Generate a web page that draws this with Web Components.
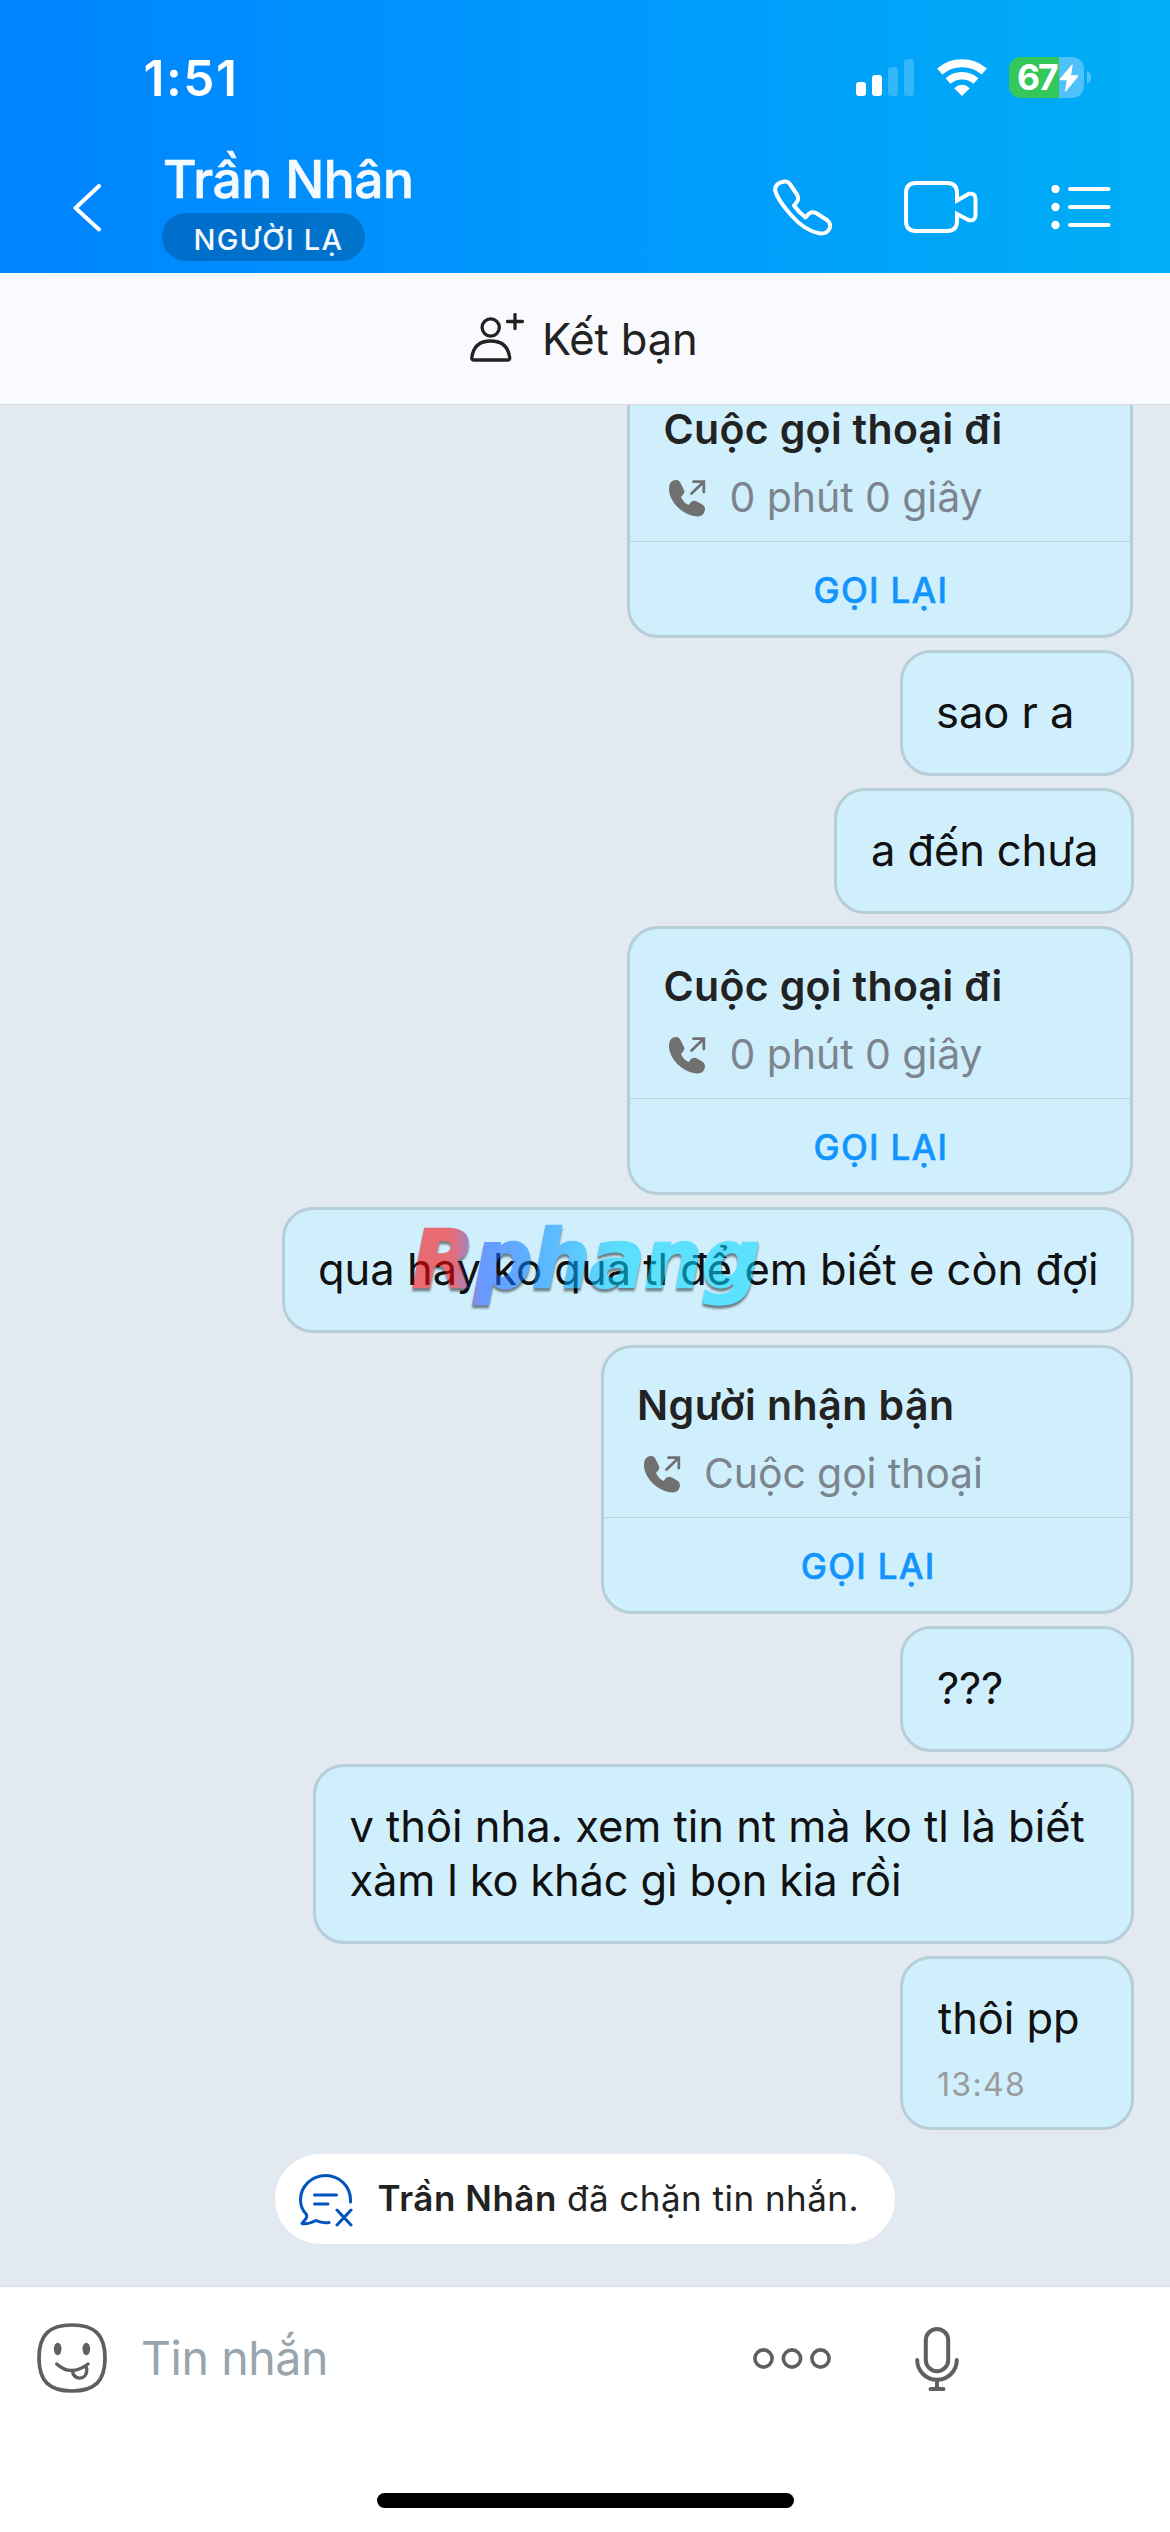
<!DOCTYPE html>
<html lang="vi">
<head>
<meta charset="utf-8">
<title>Trần Nhân</title>
<style>
html,body{margin:0;padding:0}
body{width:1170px;height:2532px;overflow:hidden;font-family:Inter,"Noto Sans",sans-serif;background:#fff}
</style>
</head>
<body>
<chat-app></chat-app>
<script>
const root = (el, html) => { el.attachShadow({mode:'open'}).innerHTML = html; };

customElements.define('status-bar', class extends HTMLElement {
  connectedCallback(){ root(this, `
<style>
:host{display:flex;height:141px;align-items:flex-start;justify-content:space-between;padding:0 79px 0 145.5px;box-sizing:border-box;color:#fff}
fit-text{font-size:49.5px;font-weight:600;line-height:60px;margin-top:48px}
.r{display:flex;margin-top:57px}
.sig{margin-top:2px}
.wifi{margin:2px 0 0 22.5px}
.bat{margin-left:22.5px;width:74.5px;height:41px;border-radius:12px;background:linear-gradient(90deg,#34c759 50px,#4fc2fb 50px);display:flex;align-items:center;padding-left:9px;box-sizing:border-box}
.bat fit-text{font-size:35.5px;font-weight:700;line-height:41px;margin-top:0}
.bat svg{margin-left:1px;flex:none}
.nub{margin:14px 0 0 3.5px}
svg{display:block}
</style>
<fit-text w="88.5">1:51</fit-text>
<div class="r">
<svg class="sig" width="58" height="37"><g fill="#fff"><rect y="23" width="10" height="14" rx="3"/><rect x="16" y="16" width="10" height="21" rx="3"/><g opacity=".2"><rect x="32" y="8" width="10" height="29" rx="3"/><rect x="48" width="10" height="37" rx="3"/></g></g></svg>
<svg class="wifi" width="50" height="37"><g fill="none" stroke="#fff" stroke-width="8"><path d="M2.7 12.5A34 34 0 0 1 47.3 12.5"/><path d="M11 22A21.5 21.5 0 0 1 39 22" stroke-width="7.5"/></g><path d="M17.2 29.2Q25 22.5 32.8 29.2L25 37Z" fill="#fff"/></svg>
<div class="bat"><fit-text w="40">67</fit-text><svg width="20" height="28" viewBox="0 0 20 28"><path d="M13 .5Q14 0 13.7 1.5L12 11.3H18.3Q19.8 11.6 18.8 13L7 27.2Q5.6 28 6 26.3L7.8 16.3H1.6Q0 16 1.2 14.6Z" fill="#fff"/></svg></div>
<svg class="nub" width="4" height="13"><path d="M0 0Q4 2 4 6.500Q4 11 0 13Z" fill="#4fc2fb"/></svg>
</div>`); }
});

customElements.define('nav-bar', class extends HTMLElement {
  connectedCallback(){ root(this, `
<style>
:host{display:flex;height:132px;color:#f3f9ff}
svg{display:block;fill:none;stroke:#fff;stroke-width:4;stroke-linecap:round;stroke-linejoin:round;flex:none}
.back{margin:43px 0 0 72px}
.who{display:flex;flex-direction:column;align-items:flex-start;margin-left:59px;width:400px}
.name{font-size:51.5px;font-weight:500;line-height:64px;margin:5.5px 0 0 3px;-webkit-text-stroke:.7px}
.tag{margin-top:2.5px;width:203px;height:48px;border-radius:24px;background:rgba(0,0,0,.2);padding-left:33.5px;box-sizing:border-box}
.tag fit-text{font-size:29px;font-weight:500;line-height:53px}
.icons{display:flex;margin-left:210px}
.icons svg:nth-child(1){margin-top:37px}
.icons svg:nth-child(2){margin:39px 0 0 70px}
.icons svg:nth-child(3){margin:44px 0 0 73px}
</style>
<svg class="back" width="31" height="48"><path d="M27 3.500L3.500 25.500L27 47" transform="translate(0 -1.500)"/></svg>
<div class="who"><fit-text class="name" w="246">Trần Nhân</fit-text><div class="tag"><fit-text w="146">NGƯỜI LẠ</fit-text></div></div>
<div class="icons">
<svg width="60" height="58"><path d="M12.500 3.500Q15.500 3 17.500 5.500L25 16.500Q27.500 21 24.500 24.500L22 27.500Q27 34.500 33.500 39.500L36.500 36Q40 33 44 35L55 42Q59.500 45.500 57.500 50.500Q55 56 48 55.500Q33 53 19 37Q5 21 3 12Q3 5 12.500 3.500Z"/></svg>
<svg width="76" height="54" style="stroke-linejoin:miter"><path d="M14 3H45Q55 3 55 13V20.500L67 13.700Q73.500 13 73.500 19V35Q73.500 41 67 40.300L55 34V41Q55 51 45 51H14Q4 51 4 41V13Q4 3 14 3Z"/></svg>
<svg width="60" height="46"><g fill="#fff" stroke="none"><circle cx="4.500" cy="4" r="4.200"/><circle cx="4.500" cy="22" r="4.200"/><circle cx="4.500" cy="40" r="4.200"/></g><path d="M19 4H57.500M19 22H57.500M19 40H57.500"/></svg>
</div>`); }
});

customElements.define('friend-bar', class extends HTMLElement {
  connectedCallback(){ root(this, `
<style>
:host{display:flex;height:132px;box-sizing:border-box;border-bottom:1px solid #d9dddf;background:#f9fafe;color:#222}
svg{display:block;margin:40px 0 0 470px;fill:none;stroke:#222;stroke-width:3.3;stroke-linecap:round;stroke-linejoin:round}
fit-text{font-size:43.5px;line-height:54px;margin:39px 0 0 21px}
</style>
<svg width="54" height="50"><circle cx="20.700" cy="14.500" r="8.600"/><path d="M3.500 47Q1.600 47 1.800 44.500Q4 28 20.700 28Q37.500 28 39.700 44.500Q40 47 38 47Z"/><path d="M37.500 8.500H52.500M45 1.500V15.500"/></svg>
<fit-text w="150">Kết bạn</fit-text>`); }
});

customElements.define('chat-bubble', class extends HTMLElement {
  connectedCallback(){
    root(this, `
<style>
:host{display:flex;flex-direction:column;box-sizing:border-box;border:3px solid #b6ced8;border-radius:31px;background:#d0effd;color:#111;padding:32px 0 0 35px;font-size:43.5px;line-height:54px;margin-right:36px}
</style><slot></slot>`);
    this.style.width = this.getAttribute('width') + 'px';
    this.style.height = (this.getAttribute('height') || 126) + 'px';
  }
});

customElements.define('call-card', class extends HTMLElement {
  connectedCallback(){
    const a = n => this.getAttribute(n);
    root(this, `
<style>
:host{display:flex;flex-direction:column;flex:none;box-sizing:border-box;height:269px;border:3px solid #b6ced8;border-radius:31px;background:#d0effd;margin-right:37.5px}
.t{font-size:41px;font-weight:600;line-height:50px;color:#222;margin:32px 0 0 36px}
.s{display:flex;height:87px;margin-left:39.5px;color:#7c858e}
.s svg{display:block;margin-top:26px;flex:none}
.s fit-text{font-size:41px;line-height:50px;margin:18px 0 0 25.5px}
.b{flex:1;border-top:1px solid #b6d2dd;margin:0 -3px;display:flex;justify-content:center;color:#1294ff}
.b fit-text{font-size:35px;font-weight:500;line-height:44px;margin-top:26px;-webkit-text-stroke:.5px}
</style>
<fit-text class="t" w="${a('tw')}">${a('title')}</fit-text>
<div class="s"><svg width="37" height="37"><path fill="#707070" d="M0 9C0 3 3 0 7 0C10 0 11 2 12 4L15 10Q16 12 14.500 14L12 17Q14 22 19.500 25L22.500 21.500Q25 20 28 21.500L34 25Q36.500 27 36 30Q34.500 36.500 29 36.500C14 36 0 22 0 9Z"/><path d="M22.500 13.500L34.500 2M24.500 1.700H34.800V12" fill="none" stroke="#707070" stroke-width="2.800" stroke-linecap="round"/></svg><fit-text w="${a('sw')}">${a('sub')}</fit-text></div>
<div class="b"><fit-text w="130">GỌI LẠI</fit-text></div>`);
    this.style.width = a('width') + 'px';
    this.removeAttribute('title');
  }
});

customElements.define('block-notice', class extends HTMLElement {
  connectedCallback(){ root(this, `
<style>
:host{display:flex;align-self:flex-start;box-sizing:border-box;width:620px;height:90px;margin:12px 0 0 275px;border-radius:45px;background:#fff;color:#222;padding-left:24px}
svg{display:block;margin-top:20px;fill:none;stroke:#0055bd;stroke-width:3;stroke-linecap:round;stroke-linejoin:round}
fit-text{font-size:35px;line-height:44px;margin-top:22px}
.n{font-weight:600;margin-left:25.5px}
.m{margin-left:13px}
</style>
<svg width="54" height="53"><path d="M51.500 28V26A25 24.500 0 0 0 1.500 26Q1.500 34 7 40Q8.500 42 7 44.500L3 49.500Q9 50.500 17 46.500Q23 49.500 30 48.500M15.500 21H37.500M15.500 30H29M38 36L52 51M52 36L38 51"/></svg>
<fit-text class="n" w="176.5">Trần Nhân</fit-text><fit-text class="m" w="288.5">đã chặn tin nhắn.</fit-text>`); }
});

customElements.define('water-mark', class extends HTMLElement {
  connectedCallback(){ root(this, `
<style>
:host{position:absolute;left:401px;top:1207px;width:370px;height:110px;pointer-events:none}
svg{display:block;overflow:visible;opacity:.56;filter:drop-shadow(0 3px 1px rgba(0,0,0,.85))}
</style>
<svg width="370" height="110"><defs><linearGradient id="g" gradientUnits="userSpaceOnUse" x1="10" y1="0" x2="360" y2="0"><stop offset=".08" stop-color="#fc0505"/><stop offset=".12" stop-color="#f60812"/><stop offset=".2" stop-color="#1a55ff"/><stop offset=".38" stop-color="#008cff"/><stop offset=".6" stop-color="#00d4ff"/><stop offset="1" stop-color="#00d8ff"/></linearGradient></defs>
<text x="11" y="80" textLength="348" lengthAdjust="spacingAndGlyphs" font-family="DejaVu Sans" font-weight="700" font-style="italic" font-size="80" fill="url(#g)" stroke="url(#g)" stroke-width="2.500">Rphang</text></svg>`); }
});

customElements.define('message-list', class extends HTMLElement {
  connectedCallback(){ root(this, `
<style>
:host{display:block;height:1881px;overflow:hidden;background:#e2e9f1}
.col{display:flex;flex-direction:column;align-items:flex-end;gap:12px;margin-top:-36px}
.time{font-size:32px;line-height:40px;color:#9b9b9b;margin-top:20px}
chat-bubble{flex:none}
</style>
<div class="col">
<call-card width="506" tw="335" title="Cuộc gọi thoại đi" sw="250" sub="0 phút 0 giây"></call-card>
<chat-bubble width="234"><fit-text w="134">sao r a</fit-text></chat-bubble>
<chat-bubble width="300"><fit-text w="224">a đến chưa</fit-text></chat-bubble>
<call-card width="506" tw="335" title="Cuộc gọi thoại đi" sw="250" sub="0 phút 0 giây"></call-card>
<chat-bubble width="852"><fit-text w="776">qua hay ko qua tl để em biết e còn đợi</fit-text></chat-bubble>
<call-card width="531.5" tw="312" title="Người nhận bận" sw="275" sub="Cuộc gọi thoại"></call-card>
<chat-bubble width="234"><fit-text w="64">???</fit-text></chat-bubble>
<chat-bubble width="821.5" height="180"><fit-text w="734">v thôi nha. xem tin nt mà ko tl là biết</fit-text><fit-text w="548.5">xàm l ko khác gì bọn kia rồi</fit-text></chat-bubble>
<chat-bubble width="234" height="174"><fit-text w="140">thôi pp</fit-text><fit-text class="time" w="85">13:48</fit-text></chat-bubble>
<block-notice></block-notice>
</div>`); }
});

customElements.define('message-composer', class extends HTMLElement {
  connectedCallback(){ root(this, `
<style>
:host{display:flex;flex-direction:column;align-items:center;height:246px;box-sizing:border-box;border-top:1px solid #dadee2;background:#fff}
.row{display:flex;width:1170px;height:206px}
svg{display:block;flex:none;fill:none;stroke:#5f5f5f;stroke-width:4;stroke-linecap:round;stroke-linejoin:round}
.e{margin:36px 0 0 37px}
.in{width:573.5px;margin:42px 0 0 36px;font-size:46.5px;line-height:58px;color:#99a4ac}
.d{margin-top:60.500px}
.m{margin:40px 0 0 83px}
.home{width:417px;height:15px;border-radius:7.5px;background:#000}
</style>
<div class="row">
<svg class="e" width="70" height="70"><path d="M35 2C58 2 68 12 68 35S58 68 35 68S2 58 2 35S12 2 35 2Z" stroke-width="3.700"/><g fill="#5f5f5f" stroke="none"><ellipse cx="20.700" cy="26" rx="3.800" ry="6.200"/><ellipse cx="49.300" cy="26" rx="3.800" ry="6.200"/></g><path d="M19.700 41Q34 54 51 41M35.500 48C36 57.500 50 58 49.800 46.500L49 43" stroke-width="3.400"/></svg>
<div class="in"><fit-text w="182">Tin nhắn</fit-text></div>
<svg class="d" width="112" height="21" style="margin-left:36.500px"><g stroke-width="3.600"><circle cx="10.500" cy="10.500" r="8.600"/><circle cx="39" cy="10.500" r="8.600"/><circle cx="67.500" cy="10.500" r="8.600"/></g></svg>
<svg class="m" width="44" height="65" style="margin-left:50px"><path d="M22 2A11.200 11.200 0 0 1 33.200 13.200V33A11.200 11.200 0 0 1 10.800 33V13.200A11.200 11.200 0 0 1 22 2ZM2.200 33A19.800 19.800 0 0 0 41.800 33M22 53V60M15.500 62H28.500"/></svg>
</div>
<div class="home"></div>`); }
});

customElements.define('chat-app', class extends HTMLElement {
  connectedCallback(){ root(this, `
<style>
:host{display:flex;flex-direction:column;position:relative;width:1170px;height:2532px}
header{height:273px;background:linear-gradient(90deg,#0084ff,#0098fd 50%,#00aef5)}
</style>
<header><status-bar></status-bar><nav-bar></nav-bar></header>
<friend-bar></friend-bar>
<message-list></message-list>
<message-composer></message-composer>
<water-mark></water-mark>`); }
});

/* A single line of text, tracked so that its ink spans "w" pixels from the left edge of its box. */
customElements.define('fit-text', class extends HTMLElement {
  connectedCallback(){
    root(this, `<style>:host{display:block;white-space:nowrap;flex:none}span{display:block;width:max-content}</style><span><slot></slot></span>`);
    const s = this.textContent, w = +this.getAttribute('w');
    const c = document.createElement('canvas').getContext('2d'), cs = getComputedStyle(this);
    c.font = `${cs.fontWeight} ${cs.fontSize} ${cs.fontFamily}`;
    const m = c.measureText(s), ink = m.actualBoundingBoxRight + m.actualBoundingBoxLeft;
    const span = this.shadowRoot.querySelector('span');
    span.style.letterSpacing = (w - ink) / ([...s].length - 1) + 'px';
    span.style.marginLeft = m.actualBoundingBoxLeft + 'px';
    this.style.width = w + 'px';
  }
});
</script>
</body>
</html>
